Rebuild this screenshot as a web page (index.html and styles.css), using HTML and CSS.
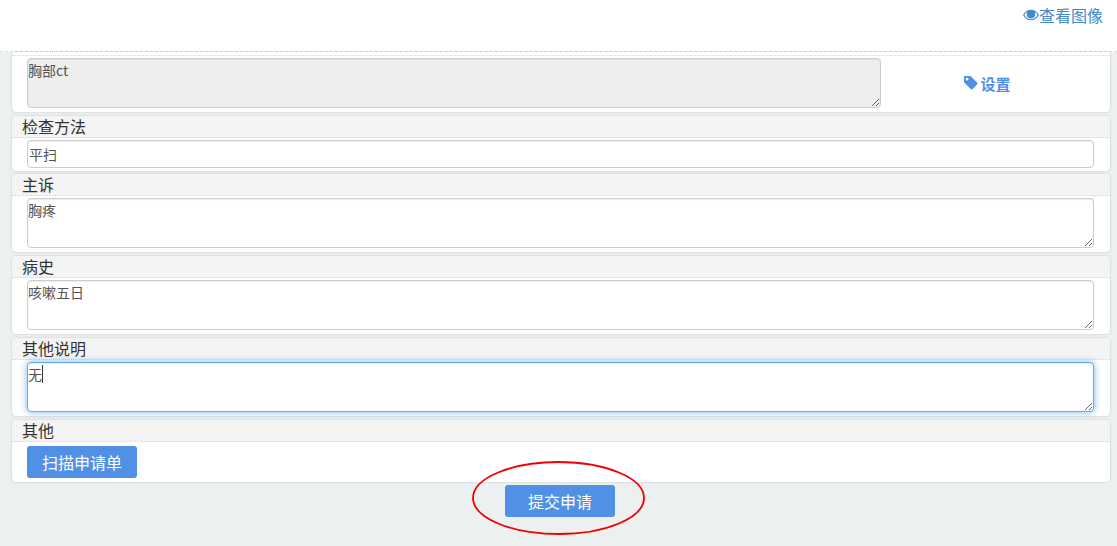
FILE: index.html
```html
<!DOCTYPE html>
<html lang="zh-CN">
<head>
    <meta charset="UTF-8">
    <meta name="viewport" content="width=device-width, initial-scale=1.0">
    <title>提交申请</title>
    <link rel="stylesheet" href="styles.css">
</head>
<body>
    <header class="top-bar">
        <a class="view-image" href="#">
            <svg class="icon-eye" viewBox="0 0 16 12" width="16" height="12"><path fill="#428bca" fill-rule="evenodd" d="M0 6C2 2.500 4.800.8 8 .8S14 2.500 16 6c-2 3.500-4.800 5.200-8 5.200S2 9.500 0 6zm1.300 0C3 8.700 5.300 10.200 8 10.200S13 8.700 14.700 6C13.800 4.600 12.700 3.500 11.500 2.800 12 3.500 12.300 4.300 12.300 5.200 12.300 7.600 10.400 9.500 8 9.500S3.700 7.600 3.700 5.200C3.700 4.300 4 3.500 4.500 2.800 3.300 3.500 2.200 4.600 1.300 6z"/></svg>查看图像
        </a>
    </header>

    <main class="sheet">
        <section class="panel panel-first">
            <div class="panel-head panel-head-empty"></div>
            <div class="panel-body panel-split">
                <textarea class="field field-readonly" readonly>胸部ct</textarea>
                <div class="setting-cell">
                    <a class="setting-link" href="#">
                        <svg class="icon-tag" viewBox="1 1 12.500 12.500" width="14" height="14"><path fill="#5091e6" fill-rule="evenodd" d="M1 1.500C1 1.200 1.200 1 1.500 1H6.200c.4 0 .7.100 1 .4l5.500 5.500c.5.500.5 1.300 0 1.800l-3.900 3.900c-.5.500-1.300.5-1.800 0L1.400 7.100C1.100 6.800 1 6.500 1 6.100V1.500zM3.800 5a1.200 1.200 0 1 0 0-2.400 1.200 1.200 0 0 0 0 2.400z"/></svg>设置
                    </a>
                </div>
            </div>
        </section>

        <section class="panel panel-short">
            <div class="panel-head">检查方法</div>
            <div class="panel-body">
                <input class="field field-input" type="text" value="平扫">
            </div>
        </section>

        <section class="panel">
            <div class="panel-head">主诉</div>
            <div class="panel-body">
                <textarea class="field">胸疼</textarea>
            </div>
        </section>

        <section class="panel">
            <div class="panel-head">病史</div>
            <div class="panel-body">
                <textarea class="field">咳嗽五日</textarea>
            </div>
        </section>

        <section class="panel">
            <div class="panel-head">其他说明</div>
            <div class="panel-body">
                <textarea class="field field-focus">无</textarea>
                <span class="caret"></span>
            </div>
        </section>

        <section class="panel panel-last">
            <div class="panel-head">其他</div>
            <div class="panel-body panel-buttons">
                <button class="btn" type="button">扫描申请单</button>
            </div>
        </section>

        <div class="submit-row">
            <button class="btn" type="button">提交申请</button>
        </div>
    </main>

    <!-- red circle marked on the screenshot -->
    <svg class="mark" width="175" height="76" viewBox="0 0 175 76"><ellipse cx="87.500" cy="38" rx="85.500" ry="36" fill="none" stroke="#f00000" stroke-width="1.800"/></svg>
</body>
</html>
```

FILE: styles.css
```css
* {
    box-sizing: border-box;
}
html, body {
    height: 100%;
}
body {
    margin: 0;
    background: #ecf0f1;
    font-family: "Noto Sans CJK SC", "Liberation Sans", sans-serif;
    color: #333;
    overflow: hidden;
    position: relative;
}
.top-bar {
    height: 52px;
    background: #fff;
    border-bottom: 1px dashed #ddd;
    display: flex;
    justify-content: flex-end;
    padding: 4px 14px 0 0;
}
.view-image {
    color: #428bca;
    font-size: 16px;
    line-height: 22px;
    text-decoration: none;
    display: flex;
    align-items: center;
    height: 22px;
}
.sheet {
    padding: 0 7px 0 12px;
}
.panel {
    background: #fff;
    border-radius: 4px;
    box-shadow: 0 0 2px rgba(0,0,0,0.22);
    margin-bottom: 4px;
}
.panel-first {
    border-radius: 0 0 4px 4px;
}
.panel-short {
    margin-bottom: 3px;
}
.panel-short .panel-body {
    padding-bottom: 3px;
}
.panel-last {
    margin-bottom: 3px;
}
.panel-head {
    height: 22px;
    background: #f4f4f4;
    border-bottom: 1px dotted #d8d8d8;
    border-radius: 4px 4px 0 0;
    padding-left: 10px;
    font-size: 16px;
    line-height: 20px;
    color: #333;
}
.panel-head-empty {
    height: 4px;
    background: #fff;
    border-radius: 0;
}
.panel-body {
    padding: 2px 16px 4px 15px;
    position: relative;
}
.panel-split {
    display: flex;
}
.field {
    display: block;
    width: 100%;
    height: 50px;
    margin: 0;
    padding: 1px 0;
    background: #fff;
    border: 1px solid #ccc;
    border-radius: 4px;
    box-shadow: inset 0 1px 1px rgba(0,0,0,0.08);
    font-family: "Noto Sans CJK SC", "Liberation Sans", sans-serif;
    font-size: 14px;
    line-height: 20px;
    color: #555;
    outline: none;
}
.field-readonly {
    width: 854px;
    flex: none;
    background: #eee;
}
.field-input {
    height: 28px;
    padding: 0 1px;
}
.field-focus {
    border-color: #66afe9;
    box-shadow: inset 0 1px 1px rgba(0,0,0,0.08), 0 0 7px rgba(102,175,233,0.9);
}
.caret {
    position: absolute;
    left: 30px;
    top: 5px;
    width: 1px;
    height: 18px;
    background: #333;
}
.setting-cell {
    flex: 1;
    display: flex;
    justify-content: center;
    align-items: center;
}
.setting-link {
    color: #5091e6;
    font-size: 15px;
    font-weight: bold;
    text-decoration: none;
    display: flex;
    align-items: center;
    gap: 2px;
}
.panel-buttons {
    padding-top: 4px;
}
.btn {
    display: block;
    width: 110px;
    height: 32px;
    padding: 0;
    border: 0;
    border-radius: 3px;
    background: #5091e6;
    color: #fff;
    font-family: "Noto Sans CJK SC", "Liberation Sans", sans-serif;
    font-size: 16px;
    line-height: 32px;
}
.submit-row {
    display: flex;
    justify-content: center;
    padding-right: 2px;
}
.mark {
    position: absolute;
    left: 471px;
    top: 460px;
}
```
